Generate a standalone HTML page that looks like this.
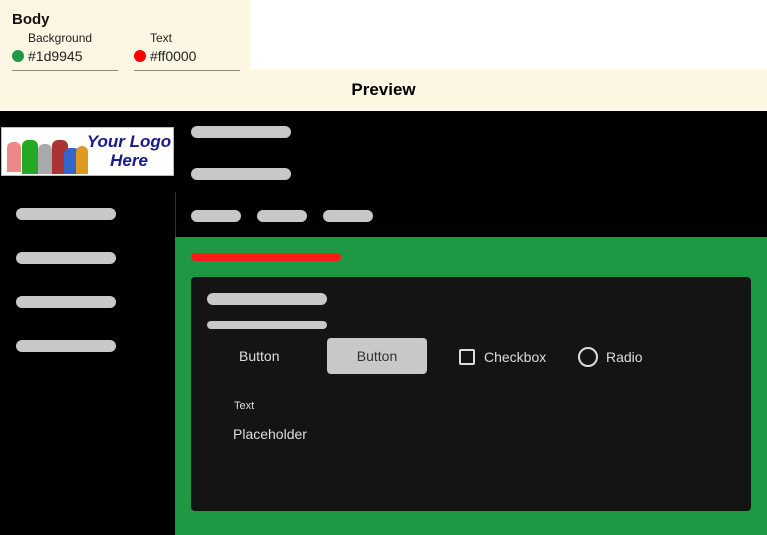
<!DOCTYPE html>
<html><head><style>
*{margin:0;padding:0;box-sizing:border-box}
body{width:767px;height:535px;position:relative;background:#fff;font-family:"Liberation Sans",sans-serif;overflow:hidden}
.a{position:absolute}
.bar{position:absolute;background:#c8c8c8;border-radius:6px}
</style></head><body>
<div class="a" style="left:0;top:0;width:250px;height:69px;background:#fdf6e3"></div>
<div class="a" style="left:0;top:69px;width:767px;height:42px;background:#fdf6e3"></div>
<div class="a" style="left:12px;top:11px;font-weight:bold;font-size:15px;color:#111">Body</div>
<div class="a" style="left:28px;top:31px;font-size:12px;color:#222">Background</div>
<div class="a" style="left:150px;top:31px;font-size:12px;color:#222">Text</div>
<div class="a" style="left:12px;top:50px;width:12px;height:12px;border-radius:50%;background:#1d9945"></div>
<div class="a" style="left:28px;top:48px;font-size:14px;color:#222">#1d9945</div>
<div class="a" style="left:12px;top:70px;width:106px;height:1px;background:#888"></div>
<div class="a" style="left:134px;top:50px;width:12px;height:12px;border-radius:50%;background:#ff0000"></div>
<div class="a" style="left:150px;top:48px;font-size:14px;color:#222">#ff0000</div>
<div class="a" style="left:134px;top:70px;width:106px;height:1px;background:#888"></div>
<div class="a" style="left:0;top:80px;width:767px;text-align:center;font-weight:bold;font-size:17px;color:#000">Preview</div>

<div class="a" style="left:0;top:111px;width:767px;height:424px;background:#000"></div>
<div class="a" style="left:175px;top:237px;width:592px;height:298px;background:#1d9945"></div>
<div class="a" style="left:175px;top:192px;width:1px;height:45px;background:#333"></div>

<div class="a" style="left:1px;top:127px;width:173px;height:49px;background:#fff;border:1px solid #bbb;overflow:hidden">
<div class="a" style="left:5px;top:14px;width:14px;height:30px;background:#e88;border-radius:6px 6px 0 0"></div>
<div class="a" style="left:20px;top:12px;width:16px;height:34px;background:#2a2;border-radius:6px 6px 0 0"></div>
<div class="a" style="left:36px;top:16px;width:14px;height:30px;background:#aaa;border-radius:6px 6px 0 0"></div>
<div class="a" style="left:50px;top:12px;width:16px;height:34px;background:#a33;border-radius:6px 6px 0 0"></div>
<div class="a" style="left:62px;top:20px;width:16px;height:26px;background:#36c;border-radius:6px 6px 0 0"></div>
<div class="a" style="left:74px;top:18px;width:12px;height:28px;background:#d92;border-radius:6px 6px 0 0"></div>
<div class="a" style="left:84px;top:4px;width:86px;text-align:center;font-style:italic;font-weight:bold;font-size:17px;line-height:19px;color:#1a1a8a">Your Logo<br>Here</div>
</div>

<div class="bar" style="left:191px;top:126px;width:100px;height:12px"></div>
<div class="bar" style="left:191px;top:168px;width:100px;height:12px"></div>
<div class="bar" style="left:191px;top:210px;width:50px;height:12px"></div>
<div class="bar" style="left:257px;top:210px;width:50px;height:12px"></div>
<div class="bar" style="left:323px;top:210px;width:50px;height:12px"></div>
<div class="bar" style="left:16px;top:208px;width:100px;height:12px"></div>
<div class="bar" style="left:16px;top:252px;width:100px;height:12px"></div>
<div class="bar" style="left:16px;top:296px;width:100px;height:12px"></div>
<div class="bar" style="left:16px;top:340px;width:100px;height:12px"></div>
<div class="a" style="left:191px;top:253px;width:150px;height:8px;background:#ff1a1a;border-radius:4px"></div>

<div class="a" style="left:191px;top:277px;width:560px;height:234px;background:#141414;border-radius:4px"></div>
<div class="bar" style="left:207px;top:293px;width:120px;height:12px"></div>
<div class="bar" style="left:207px;top:321px;width:120px;height:8px;border-radius:4px"></div>
<div class="a" style="left:239px;top:348px;font-size:14px;color:#ddd">Button</div>
<div class="a" style="left:327px;top:338px;width:100px;height:36px;background:#c8c8c8;border-radius:4px;text-align:center;line-height:36px;font-size:14px;color:#333">Button</div>
<div class="a" style="left:459px;top:349px;width:16px;height:16px;border:2px solid #ddd;border-radius:2px"></div>
<div class="a" style="left:484px;top:349px;font-size:14px;color:#ddd">Checkbox</div>
<div class="a" style="left:578px;top:347px;width:20px;height:20px;border:2px solid #ddd;border-radius:50%"></div>
<div class="a" style="left:606px;top:349px;font-size:14px;color:#ddd">Radio</div>
<div class="a" style="left:234px;top:400px;font-size:11px;color:#ddd">Text</div>
<div class="a" style="left:233px;top:426px;font-size:14px;color:#ddd">Placeholder</div>
</body></html>
